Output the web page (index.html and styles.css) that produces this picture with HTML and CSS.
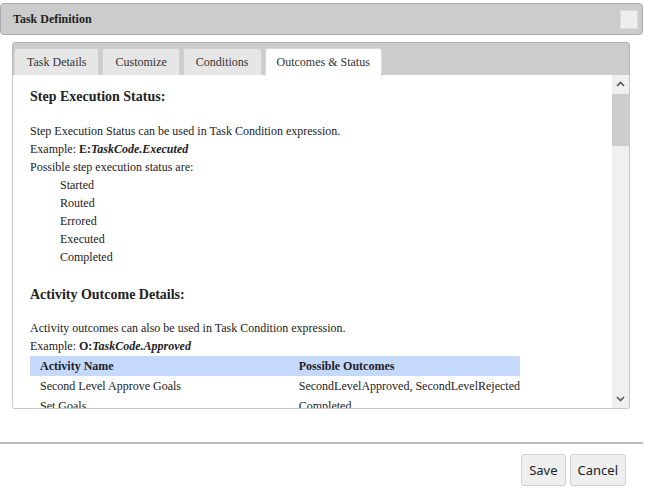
FILE: index.html
```html
<!DOCTYPE html>
<html>
<head>
<meta charset="utf-8">
<link rel="stylesheet" href="styles.css">
</head>
<body>
<div class="dialog">
  <div class="titlebar">
    <span class="title">Task Definition</span>
    <span class="title-btn"></span>
  </div>
  <div class="tabs-wrap">
    <div class="tabbar">
      <div class="tab">Task Details</div>
      <div class="tab">Customize</div>
      <div class="tab">Conditions</div>
      <div class="tab active">Outcomes &amp; Status</div>
    </div>
    <div class="panel">
      <div class="content">
        <h3 class="heading first">Step Execution Status:</h3>
        <div class="line">Step Execution Status can be used in Task Condition expression.</div>
        <div class="line">Example: <b>E:<i>TaskCode.Executed</i></b></div>
        <div class="line">Possible step execution status are:</div>
        <div class="line indent">Started</div>
        <div class="line indent">Routed</div>
        <div class="line indent">Errored</div>
        <div class="line indent">Executed</div>
        <div class="line indent">Completed</div>
        <h3 class="heading">Activity Outcome Details:</h3>
        <div class="line">Activity outcomes can also be used in Task Condition expression.</div>
        <div class="line">Example: <b>O:<i>TaskCode.Approved</i></b></div>
        <table class="outcomes">
          <thead>
            <tr><th class="c1">Activity Name</th><th class="c2">Possible Outcomes</th></tr>
          </thead>
          <tbody>
            <tr><td>Second Level Approve Goals</td><td>SecondLevelApproved, SecondLevelRejected</td></tr>
            <tr><td>Set Goals</td><td>Completed</td></tr>
          </tbody>
        </table>
      </div>
      <div class="scrollbar">
        <div class="sb-arrow">
          <svg width="9" height="6" viewBox="0 0 9 6"><polyline points="1,5 4.5,1.5 8,5" fill="none" stroke="#555" stroke-width="1.6"/></svg>
        </div>
        <div class="sb-track"><div class="sb-thumb"></div></div>
        <div class="sb-arrow">
          <svg width="9" height="6" viewBox="0 0 9 6"><polyline points="1,1 4.5,4.5 8,1" fill="none" stroke="#555" stroke-width="1.6"/></svg>
        </div>
      </div>
    </div>
  </div>
  <div class="footer">
    <button class="btn">Save</button>
    <button class="btn">Cancel</button>
  </div>
</div>
</body>
</html>
```

FILE: styles.css
```css
html, body {
  margin: 0;
  padding: 0;
  background: #ffffff;
}
body {
  font-family: "Liberation Serif", "Times New Roman", serif;
  color: #222;
  font-size: 12px;
}
.dialog {
  width: 645px;
  height: 496px;
  padding-top: 3px;
  box-sizing: border-box;
}
.titlebar {
  margin-right: 2px;
  height: 32px;
  box-sizing: border-box;
  background: #cccccc;
  border: 1px solid #a9a9a9;
  border-radius: 4px;
  display: flex;
  align-items: center;
  justify-content: space-between;
  padding: 0 4px 0 12px;
}
.title {
  font-weight: bold;
  font-size: 12px;
  color: #222;
}
.title-btn {
  width: 18px;
  height: 19px;
  background: #eeeeee;
  border: 1px solid #dcdcdc;
  box-sizing: border-box;
}
.tabs-wrap {
  margin: 7px 15px 0 12px;
}
.tabbar {
  height: 33px;
  box-sizing: border-box;
  background: #cccccc;
  border: 1px solid #b3b3b3;
  border-bottom: none;
  border-radius: 4px 4px 0 0;
  display: flex;
  align-items: flex-end;
  gap: 3px;
  padding: 0 0 0 1px;
}
.tab {
  height: 27px;
  box-sizing: border-box;
  background: #e6e6e6;
  border: 1px solid #d2d2d2;
  border-bottom: none;
  border-radius: 3px 3px 0 0;
  padding: 0 12px;
  display: flex;
  align-items: center;
  font-size: 12px;
  color: #333;
}
.tab.active {
  background: #ffffff;
  border-color: #d9d9d9;
  padding: 0 11px;
  height: 28px;
  margin-bottom: -1px;
}
.panel {
  height: 334px;
  box-sizing: border-box;
  border: 1px solid #c8c8c8;
  border-top: none;
  border-radius: 0 0 3px 3px;
  display: flex;
  overflow: hidden;
  background: #fff;
}
.content {
  flex: 1;
  overflow: hidden;
  padding: 13px 0 0 17px;
}
.heading {
  margin: 20px 0 15px 0;
  font-size: 14px;
  line-height: 18px;
  font-weight: bold;
  color: #222;
}
.heading.first {
  margin-top: 0;
  margin-bottom: 16px;
}
.line {
  line-height: 18px;
  white-space: nowrap;
}
.indent {
  padding-left: 30px;
}
.outcomes {
  border-collapse: collapse;
  width: 490px;
  margin-top: 1px;
}
.outcomes th, .outcomes td {
  text-align: left;
  padding: 0 0 0 10px;
  height: 20px;
  white-space: nowrap;
  font-size: 12px;
}
.outcomes th {
  background: #c5d9fd;
  font-weight: bold;
}
.outcomes .c1 { width: 249px; }
.scrollbar {
  width: 17px;
  background: #f0f0f0;
  display: flex;
  flex-direction: column;
}
.sb-arrow {
  height: 18px;
  display: flex;
  align-items: center;
  justify-content: center;
}
.sb-track {
  flex: 1;
  padding-top: 1px;
}
.sb-thumb {
  height: 52px;
  background: #cdcdcd;
}
.footer {
  margin-top: 33px;
  border-top: 2px solid #bdbdbd;
  margin-right: 2px;
  display: flex;
  justify-content: flex-end;
  gap: 4px;
  padding: 10px 17px 0 0;
}
.btn {
  height: 32px;
  font-family: "Noto Sans", "DejaVu Sans", sans-serif;
  font-size: 13px;
  color: #222;
  background: #efefef;
  border: 1px solid #d0d0d0;
  border-radius: 3px;
  padding: 0 7px;
  margin: 0;
}
```
